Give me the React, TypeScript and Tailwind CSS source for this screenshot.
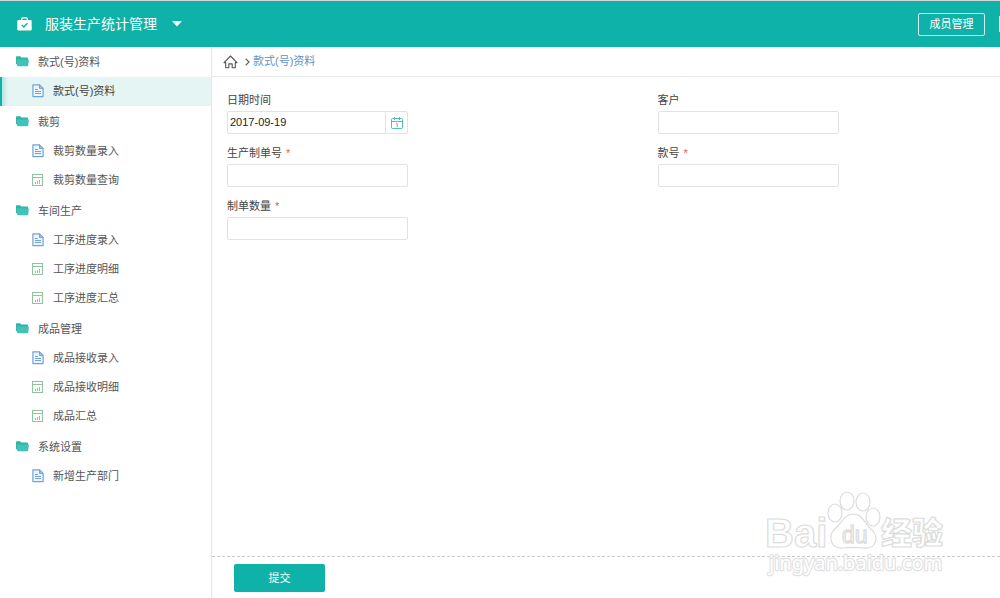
import { useState } from 'react';
import type { ReactNode } from 'react';

type Kind = 'doc' | 'chart';
type Group = { title: string; items: { label: string; kind: Kind }[] };

const groups: Group[] = [
  { title: '款式(号)资料', items: [{ label: '款式(号)资料', kind: 'doc' }] },
  {
    title: '裁剪',
    items: [
      { label: '裁剪数量录入', kind: 'doc' },
      { label: '裁剪数量查询', kind: 'chart' },
    ],
  },
  {
    title: '车间生产',
    items: [
      { label: '工序进度录入', kind: 'doc' },
      { label: '工序进度明细', kind: 'chart' },
      { label: '工序进度汇总', kind: 'chart' },
    ],
  },
  {
    title: '成品管理',
    items: [
      { label: '成品接收录入', kind: 'doc' },
      { label: '成品接收明细', kind: 'chart' },
      { label: '成品汇总', kind: 'chart' },
    ],
  },
  { title: '系统设置', items: [{ label: '新增生产部门', kind: 'doc' }] },
];

function BriefcaseIcon() {
  return (
    <svg width="15" height="14" viewBox="0 0 15 14" aria-hidden="true">
      <path d="M4.7 3.2V2a1.1 1.1 0 0 1 1.1-1.1h3.4A1.1 1.1 0 0 1 10.3 2v1.2" fill="none" stroke="#fff" strokeWidth="1.3" />
      <rect x="0.3" y="2.9" width="14.4" height="10.6" rx="1" fill="#fff" />
      <path d="M4.8 7.9l2.1 2.1 3.6-3.7" fill="none" stroke="#0fb2a8" strokeWidth="1.4" />
    </svg>
  );
}

function FolderIcon() {
  return (
    <svg className="mb-px" width="13" height="11" viewBox="0 0 13 11" aria-hidden="true">
      <path d="M0 1a.7.7 0 0 1 .7-.7h3.6l1 1.2h6a.7.7 0 0 1 .7.7v6H0z" fill="#2fb5a9" />
      <path d="M.8 3.5h12.1l-.7 6a.8.8 0 0 1-.8.7H1.9a.8.8 0 0 1-.8-.7z" fill="#42c2b8" />
    </svg>
  );
}

function DocIcon() {
  return (
    <svg className="mb-0.5" width="12" height="14" viewBox="0 0 12 14" fill="none" stroke="#74a3d3" aria-hidden="true">
      <path d="M7.5.9H.9v11.7h10.200V4.400z" fill="#edf5fc" strokeWidth="1.2" strokeLinejoin="round" />
      <path d="M7.5.9v3.5h3.600z" fill="#a9c8e8" strokeWidth="1" strokeLinejoin="round" />
      <path d="M3 5.5h2.800M3 7.500h6M3 9.500h6" strokeWidth="1.2" />
    </svg>
  );
}

function ChartIcon() {
  return (
    <svg className="mb-0.5" width="12" height="13" viewBox="0 0 12 13" fill="none" stroke="#93c4a0" aria-hidden="true">
      <rect x="0.5" y="1.5" width="10" height="11" strokeWidth="1.1" />
      <path d="M.5 4.500h10" strokeWidth="1" />
      <path d="M3.500 11V9M5.500 11V8M7.500 11V7" strokeWidth="1" />
    </svg>
  );
}

function HomeIcon() {
  return (
    <svg width="15" height="14" viewBox="0 0 15 14" fill="none" stroke="#555" strokeWidth="1.1" strokeLinejoin="round" aria-hidden="true">
      <path d="M1 7.6L7.5 1 14 7.6h-1.700v5.200H9.200V8.900H5.800v3.900H2.700V7.600z" />
    </svg>
  );
}

function CalendarIcon() {
  return (
    <svg width="12" height="12" viewBox="0 0 12 12" fill="none" stroke="#4fc0b5" aria-hidden="true">
      <rect x="0.5" y="1.5" width="11" height="10" rx="1" />
      <path d="M.5 4.5h11M3.5 0v3M8.5 0v3M5 6.5h1.200v3.700" />
    </svg>
  );
}

function Field({ id, label, required, children }: { id: string; label: string; required?: boolean; children?: ReactNode }) {
  return (
    <div>
      <label htmlFor={id} className="flex h-[22px] items-center gap-1 text-[11px] text-[#444]">
        {label}
        {required && <span className="text-[#e4574c]">*</span>}
      </label>
      {children ?? (
        <input
          id={id}
          type="text"
          className="block h-[23px] w-[181px] rounded-xs border border-[#e2e2e2] px-1 outline-none focus:border-[#0fb2a8]"
        />
      )}
    </div>
  );
}

function Watermark() {
  return (
    <svg
      className="pointer-events-none absolute right-[50px] bottom-[20px]"
      width="190"
      height="92"
      viewBox="0 0 190 92"
      fill="#fff"
      stroke="#dcdcdc"
      strokeWidth="1.2"
      strokeLinejoin="round"
      aria-hidden="true"
    >
      <g fontFamily='"Liberation Sans", "Noto Sans CJK SC", sans-serif' fontWeight="700">
        <text x="5" y="61" fontSize="40">Bai</text>
        <text x="121" y="58" fontSize="31" fontWeight="900">经验</text>
      </g>
      <text
        x="9"
        y="84"
        fontSize="20"
        fontFamily='"Noto Sans", sans-serif'
        paintOrder="stroke"
        strokeWidth="2.4"
        stroke="#e2e2e2"
      >
        jingyan.baidu.com
      </text>
      <ellipse cx="75" cy="27" rx="7" ry="9" />
      <ellipse cx="87" cy="15" rx="7" ry="9" />
      <ellipse cx="103" cy="16" rx="7" ry="9" />
      <ellipse cx="113" cy="31" rx="7" ry="9" />
      <path d="M93 28c-8 0-11 8-15 12-4 3-8 7-7 13 1 7 6 10 12 9 7-1 13-1 20 0 7 1 12-2 13-9 0-6-4-9-8-13-4-5-7-12-15-12z" />
      <text x="82" y="57" fontSize="23" fontFamily='"Liberation Sans", sans-serif' strokeWidth="1.3">du</text>
    </svg>
  );
}

export default function App() {
  const [active, setActive] = useState('款式(号)资料');

  return (
    <div className="relative flex min-h-screen flex-col overflow-hidden bg-white font-['Liberation_Sans','Noto_Sans_CJK_SC',sans-serif] text-[11px] text-[#555]">
      <header className="flex h-[47px] shrink-0 items-center border-t border-[#d5d8d8] bg-[#0fb2a8] pl-[17px] text-white">
        <BriefcaseIcon />
        <h1 className="ml-[13px] text-[14px]">服装生产统计管理</h1>
        <button type="button" aria-label="切换应用" className="ml-[13px] p-0.5">
          <svg width="10" height="6" viewBox="0 0 10 6" aria-hidden="true">
            <path d="M0 0h10L5 5.6z" fill="#fff" />
          </svg>
        </button>
        <button type="button" className="ml-auto h-[23px] w-[67px] rounded-xs border border-white/80 text-[11px]">
          成员管理
        </button>
        <span className="ml-[14px] h-4 w-px bg-white/80" />
      </header>

      <div className="flex grow">
        <nav className="w-[212px] shrink-0 border-r border-[#e6e6e6]">
          {groups.map((group) => (
            <section key={group.title} className="mb-px">
              <h2 className="flex h-[30px] items-center gap-[9px] pl-4">
                <FolderIcon />
                {group.title}
              </h2>
              <ul>
                {group.items.map((item) => (
                  <li key={item.label}>
                    <a
                      href="#"
                      onClick={() => setActive(item.label)}
                      className={
                        item.label === active
                          ? 'flex h-[29px] items-center gap-[9px] border-l-2 border-[#0fb2a8] bg-linear-to-r from-[#b8e4e0] to-[#e5f5f3] to-3% pl-[30px] text-[#444]'
                          : 'flex h-[29px] items-center gap-[9px] pl-8'
                      }
                    >
                      {item.kind === 'doc' ? <DocIcon /> : <ChartIcon />}
                      {item.label}
                    </a>
                  </li>
                ))}
              </ul>
            </section>
          ))}
        </nav>

        <main className="flex min-w-0 grow flex-col">
          <div className="flex h-[30px] items-center border-b border-[#e8e8e8] pl-[11px]">
            <a href="#" aria-label="首页">
              <HomeIcon />
            </a>
            <svg className="mr-[3px] ml-[7px]" width="5" height="8" viewBox="0 0 5 8" fill="none" stroke="#666" strokeWidth="1.2" aria-hidden="true">
              <path d="M.7.8L4 4 .7 7.2" />
            </svg>
            <a href="#" className="text-[#5d93c4]">
              款式(号)资料
            </a>
          </div>

          <form className="flex grow flex-col" onSubmit={(e) => e.preventDefault()}>
            <div className="grid grow grid-cols-2 content-start gap-x-[88px] gap-y-2 pt-3 pl-[15px]">
              <Field id="date" label="日期时间">
                <div className="flex h-[23px] w-[181px] rounded-xs border border-[#e2e2e2]">
                  <input
                    id="date"
                    type="text"
                    defaultValue="2017-09-19"
                    className="min-w-0 grow px-0.5 text-[11px] text-[#222] outline-none"
                  />
                  <button type="button" aria-label="选择日期" className="flex w-[22px] items-center justify-center border-l border-[#e2e2e2]">
                    <CalendarIcon />
                  </button>
                </div>
              </Field>
              <Field id="customer" label="客户" />
              <Field id="order" label="生产制单号" required />
              <Field id="style" label="款号" required />
              <Field id="quantity" label="制单数量" required />
            </div>
            <footer className="h-[42px] border-t border-dashed border-[#ccc] pt-[7px] pl-[22px]">
              <button type="submit" className="h-7 w-[91px] rounded-xs bg-[#0fb2a8] text-[11px] text-white">
                提交
              </button>
            </footer>
          </form>
        </main>
      </div>
      <Watermark />
    </div>
  );
}
